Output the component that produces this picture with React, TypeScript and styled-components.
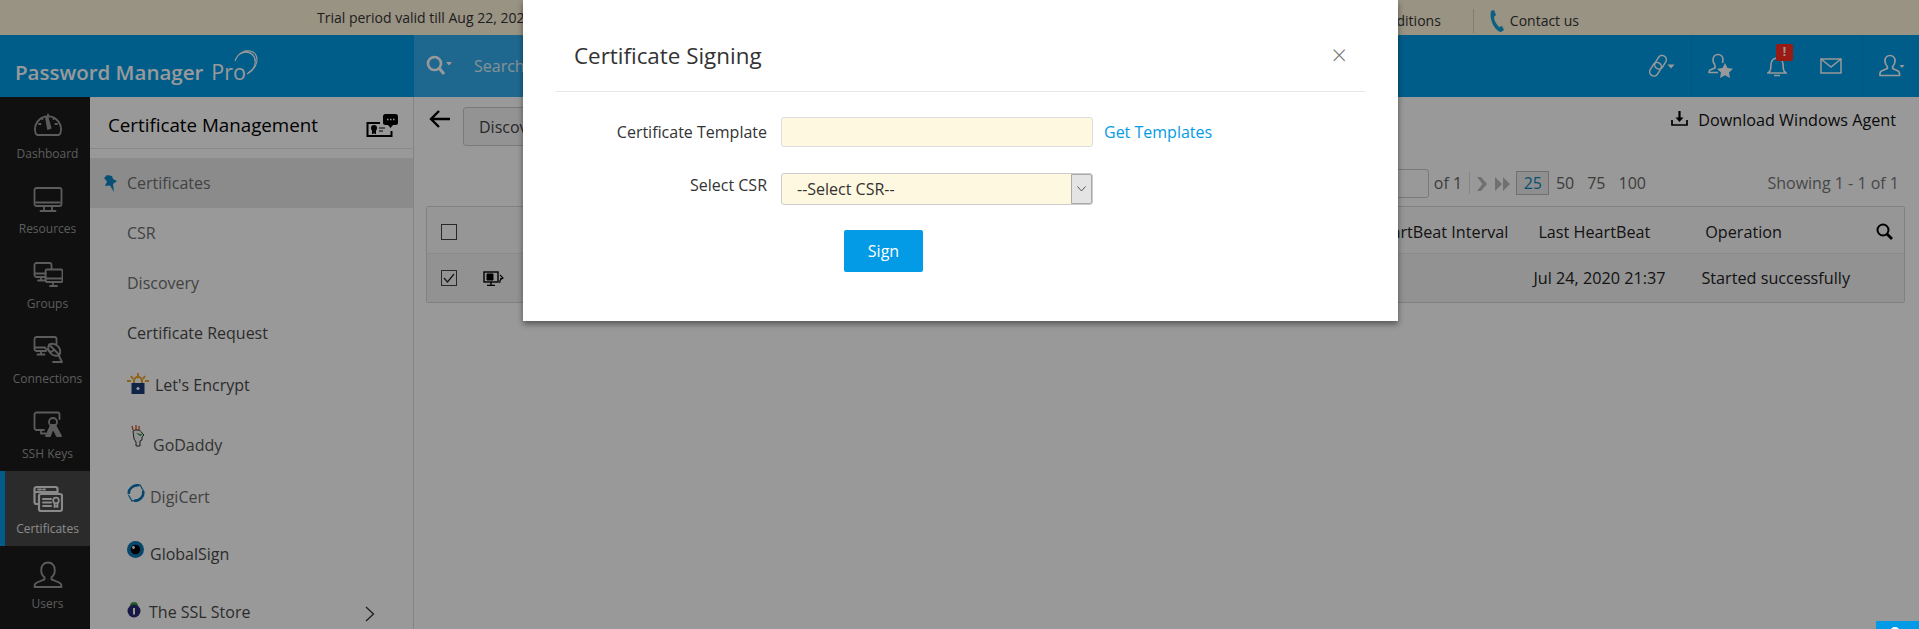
import React from 'react';
import styled, {createGlobalStyle} from 'styled-components';

const GlobalStyle = createGlobalStyle`
    html, body {
        margin: 0;
        height: 100%;
        overflow: hidden;
        background: #fff;
    }
    * {
        box-sizing: border-box;
    }
    body, input, select, button {
        font-family: "Open Sans", "Noto Sans", sans-serif;
    }
`

const Line = ({children, size = 24, color = 'currentColor', w = 1.8}: {children: React.ReactNode, size?: number, color?: string, w?: number}) => (
    <svg width={size} height={size} viewBox="0 0 30 30" fill="none" stroke={color} strokeWidth={w} strokeLinecap="round" strokeLinejoin="round">
        {children}
    </svg>
);

const railIcons: Record<string, React.ReactNode> = {
    gauge: <>
        <path d="M4.500 25a2.500 2.500 0 0 1-1.700-1.200A13 13 0 1 1 27.200 23.800a2.500 2.500 0 0 1-1.700 1.200z"/>
        <path d="M13 7.500l1.500-.5 3 11-2.500 1z" fill="currentColor"/>
        <path d="M15 4.500v1.500M6 14h1.600M24 14h-1.600M8.500 8l1 1M21.500 8l-1 1"/>
    </>,
    monitor: <>
        <rect x="1.500" y="3" width="27" height="18" rx="2"/>
        <path d="M11 21v4M19 21v4M7.500 26h15M3 17.500h24"/>
    </>,
    groups: <>
        <path d="M13 17H3.500a2 2 0 0 1-2-2V5a2 2 0 0 1 2-2h13a2 2 0 0 1 2 2v4M2 13.500h11M8 17v3M5 20.500h8"/>
        <rect x="12.500" y="9.500" width="17" height="12.500" rx="1.500"/>
        <path d="M20 22v3M17 26h7M13 18.500h16"/>
    </>,
    connection: <>
        <path d="M13 16H3.500a2 2 0 0 1-2-2V4a2 2 0 0 1 2-2h18a2 2 0 0 1 2 2v5M2 12.500h10M8 16v3M4.500 19.500h7"/>
        <path d="M16 9.500a8 8 0 0 1 10.500 10.500zM16 9.500a8 8 0 0 0 10.500 10.500z"/>
        <path d="M12 13l6 4M21 15l-3 2M20 27h9l-3-6"/>
    </>,
    keys: <>
        <path d="M11 20H3.500a2 2 0 0 1-2-2V4.500a2 2 0 0 1 2-2h21a2 2 0 0 1 2 2V9M8 20v3.500h4.500"/>
        <circle cx="20" cy="12" r="4"/>
        <path d="M13 26l5-11h4l6 11h-4l-4-8-3 8z" fill="currentColor"/>
    </>,
    cert: <>
        <path d="M5 19H3.500a2 2 0 0 1-2-2V4a2 2 0 0 1 2-2h19a2 2 0 0 1 2 2v4" strokeWidth="2.200"/>
        <path d="M2 7h22M5 4.500h3M10 4.500h2"/>
        <rect x="6" y="9" width="23" height="17" rx="2" strokeWidth="2.200"/>
        <path d="M10 14h8M10 17.500h8M10 21h8" strokeWidth="2"/>
        <circle cx="23" cy="15.500" r="2.800" strokeWidth="1.800"/>
        <path d="M21.500 18v4l1.500-1 1.500 1v-4"/>
    </>,
    user: <>
        <path d="M15 2.500c4.200 0 6.800 3.300 6.800 7.400 0 3-1.500 6-3.300 7.300v2.200l7.500 3.100c1.700.8 2.500 2 2.500 3.500v1H1.500v-1c0-1.500.8-2.700 2.500-3.500l7.500-3.100v-2.200c-1.800-1.300-3.300-4.300-3.300-7.300 0-4.100 2.600-7.400 6.800-7.400z"/>
    </>,
};

const railItems = [
    {label: 'Dashboard', icon: 'gauge'},
    {label: 'Resources', icon: 'monitor'},
    {label: 'Groups', icon: 'groups'},
    {label: 'Connections', icon: 'connection'},
    {label: 'SSH Keys', icon: 'keys'},
    {label: 'Certificates', icon: 'cert', active: true},
    {label: 'Users', icon: 'user'},
];

const LetsEncryptIcon = () => (
    <svg width="22" height="22" viewBox="0 0 22 22" fill="none">
        <path d="M11 0v4M4 3l2 3M18 3l-2 3M0 8h4M18 8h4" stroke="#f0a020" strokeWidth="1.800"/>
        <path d="M7 10V8a4 4 0 0 1 8 0v2" stroke="#f0a020" strokeWidth="2"/>
        <rect x="4.500" y="10" width="13" height="11" fill="#1c3c78"/>
        <circle cx="11" cy="15.500" r="1.600" fill="#fff"/>
    </svg>
);
const GoDaddyIcon = () => (
    <svg width="19" height="22" viewBox="-4 0 19 22" fill="none">
        <path d="M2 5L1 1M5 5V0M8 5V1" stroke="#d0521e" strokeWidth="1.300"/>
        <path d="M2 6c3-2 8-1 9 2l2 2-2 2v3l-2 1v5H5v-4L3 14z" fill="#f4f4f4" stroke="#333" strokeWidth="1"/>
        <path d="M5 8l7 1.500-3 1.500z" fill="#2c9c3c"/>
    </svg>
);
const DigiCertIcon = () => (
    <svg width="18" height="18" viewBox="0 0 18 18" fill="none">
        <path d="M2 10C1 5 6 1 12 1M16 7c1.500 5-3 10-9 10" stroke="#0c77b4" strokeWidth="2.600"/>
        <path d="M5 3l8-2 3.500 6M13 15l-8 2-3.500-6" stroke="#0c77b4" strokeWidth="1.200"/>
    </svg>
);
const GlobalSignIcon = () => (
    <svg width="17" height="17" viewBox="0 0 17 17">
        <circle cx="8.500" cy="8.500" r="8.500" fill="#0c77b4"/>
        <circle cx="8.500" cy="8.500" r="4.800" fill="#000"/>
        <circle cx="6.500" cy="6.500" r="1.400" fill="#fff"/>
    </svg>
);
const SslStoreIcon = () => (
    <svg width="14" height="18" viewBox="0 0 14 18">
        <path d="M3 6a4 4 0 0 1 8 0z" fill="#3f9d3f"/>
        <circle cx="7" cy="11" r="6.500" fill="#2a2a78"/>
        <rect x="6" y="8" width="2" height="6.500" fill="#fff"/>
    </svg>
);

const PinIcon = () => (
    <svg width="13" height="17" viewBox="0 0 13 17">
        <path d="M3 0l5 1 1 3 4 2-4 3 1 8-4-6.500-5 .5 2-4.500L0 3z" fill="#0c85c0"/>
    </svg>
);

const menuItems: {label: string, icon?: React.ReactNode, pin?: boolean, active?: boolean, h: number, gap?: number, lift?: number, arrow?: boolean, tone: string}[] = [
    {label: 'Certificates', pin: true, active: true, h: 50, tone: '#6e6e6e'},
    {label: 'CSR', h: 50, tone: '#6e6e6e'},
    {label: 'Discovery', h: 50, tone: '#6e6e6e'},
    {label: 'Certificate Request', h: 50, tone: '#4a4a4a'},
    {label: "Let's Encrypt", icon: <LetsEncryptIcon/>, h: 54, gap: 6, lift: 1, tone: '#4a4a4a'},
    {label: 'GoDaddy', icon: <GoDaddyIcon/>, h: 66, gap: 7, lift: 9, tone: '#555'},
    {label: 'DigiCert', icon: <DigiCertIcon/>, h: 38, gap: 5, lift: 4, tone: '#6e6e6e'},
    {label: 'GlobalSign', icon: <GlobalSignIcon/>, h: 76, gap: 6, lift: 5, tone: '#4a4a4a'},
    {label: 'The SSL Store', icon: <SslStoreIcon/>, h: 40, gap: 8, lift: 3, arrow: true, tone: '#4a4a4a'},
];

const App = () => {
    return (
        <Page>
            <GlobalStyle/>
            <TopBar>
                <Trial>Trial period valid till Aug 22, 2020</Trial>
                <TopLinks>
                    <span>Terms and Conditions</span>
                    <TopDivider/>
                    <svg width="16" height="22" viewBox="0 0 16 22">
                        <path d="M2 1l3-1 2 5-2 2c0 3 2 7 5 10l3-1 2 4-3 2C6 21 0 10 2 1z" fill="#12a0d8"/>
                    </svg>
                    <span>Contact us</span>
                </TopLinks>
            </TopBar>
            <Header>
                <Logo>
                    <LogoText>Password Manager<LogoPro>Pro</LogoPro></LogoText>
                    <LogoSwoosh>
                        <svg width="26" height="26" viewBox="0 0 26 26" fill="none" stroke="#fff">
                            <path d="M1 12C4 3 13 0 19 3c6 4 6 15-6 22" strokeWidth="1.100"/>
                            <path d="M6 5c6-4 13-1 15 5 1 6-2 11-7 14" strokeWidth="1.100"/>
                            <path d="M10 2c7 0 11 4 11 10" strokeWidth="1"/>
                        </svg>
                    </LogoSwoosh>
                </Logo>
                <SearchBox>
                    <svg width="26" height="22" viewBox="0 0 26 22" fill="none">
                        <circle cx="8.500" cy="8.500" r="6.500" stroke="#fff" strokeWidth="2.600"/>
                        <path d="M13 13l5 6" stroke="#fff" strokeWidth="3"/>
                        <path d="M20 7h6l-3 3.500z" fill="#fff"/>
                    </svg>
                    <SearchText>Search</SearchText>
                </SearchBox>
                <HeaderTools>
                    <ToolGroup>
                        <svg width="26" height="24" viewBox="0 0 26 24" fill="none" stroke="#fff" strokeWidth="1.500">
                            <rect x="7.250" y="1" width="8.500" height="14.500" rx="4.250" transform="rotate(32 11.500 8.250)"/>
                            <rect x="2.250" y="8" width="8.500" height="14.500" rx="4.250" transform="rotate(32 6.500 15.250)"/>
                            <path d="M18.500 10.500h7l-3.500 4z" fill="#fff" stroke="none"/>
                        </svg>
                    </ToolGroup>
                    <ToolGroup $gap={33} $wide>
                        <svg width="26" height="26" viewBox="0 0 26 26" fill="none" stroke="#fff" strokeWidth="1.600">
                            <path d="M10 1.500c3 0 5 2.500 5 5.500 0 1-.2 2-.6 3M7 12c-1-1-2-3-2-5 0-3 2-5.500 5-5.500M7 12v3l-5 2c-1 .5-1 1.500-1 2.500h9"/>
                            <path d="M17 10l2.500 5 5.500.7-4 3.800 1 5.500-5-2.700-5 2.700 1-5.500-4-3.800 5.500-.7z" fill="#fff" stroke="none"/>
                        </svg>
                        <BellWrap>
                            <svg width="20" height="24" viewBox="0 0 20 24" fill="none" stroke="#fff" strokeWidth="1.600">
                                <path d="M3 17c1-2 1-4 1-7a6 6 0 0 1 12 0c0 3 0 5 1 7l2 2H1zM7 21.500h6M10 1v3"/>
                            </svg>
                            <Badge>!</Badge>
                        </BellWrap>
                        <svg width="22" height="16" viewBox="0 0 22 16" fill="none" stroke="#fff" strokeWidth="1.500">
                            <rect x="1" y="1" width="20" height="14"/>
                            <path d="M1 1l10 8 10-8"/>
                        </svg>
                    </ToolGroup>
                    <UserTool>
                        <svg width="26" height="24" viewBox="0 0 26 24" fill="none" stroke="#fff" strokeWidth="1.700">
                            <path d="M11 1.500c3 0 5 2.500 5 5.500 0 2.200-1 4.300-2.300 5.300v2.200l5.300 2.500c1.200.6 1.500 1.500 1.500 2.500v2H1v-2c0-1 .3-1.900 1.500-2.500l5.800-2.500v-2.200C7 11.300 6 9.200 6 7c0-3 2-5.500 5-5.500z"/>
                            <path d="M20.500 11h5l-2.500 3z" fill="#fff" stroke="none"/>
                        </svg>
                    </UserTool>
                </HeaderTools>
            </Header>
            <Body>
                <Rail>
                    {railItems.map(item => (
                        <RailItem key={item.label} $active={item.active}>
                            <Line size={30}>{railIcons[item.icon]}</Line>
                            <span>{item.label}</span>
                        </RailItem>
                    ))}
                </Rail>
                <Panel>
                    <PanelHead>
                        <PanelTitle>Certificate Management</PanelTitle>
                        <PanelBadge>
                            <svg width="32" height="24" viewBox="0 0 32 24" fill="none">
                                <path d="M14 9H1.500v13h24v-5" stroke="#000" strokeWidth="2"/>
                                <circle cx="8" cy="14" r="3" fill="#000"/>
                                <path d="M6.500 15v5l1.500-1.500L9.500 20v-5zM13 14h6M13 17h4" fill="#000" stroke="#000"/>
                                <path d="M17 2.500A2.500 2.500 0 0 1 19.500 0h10A2.500 2.500 0 0 1 32 2.500v6a2.500 2.500 0 0 1-2.500 2.500H27l-2.500 3-2.500-3h-2.500A2.500 2.500 0 0 1 17 8.500z" fill="#000"/>
                                <path d="M21 5.500h1.500M24 5.500h1.500M27 5.500h1.500" stroke="#fff" strokeWidth="1.600"/>
                            </svg>
                        </PanelBadge>
                    </PanelHead>
                    <Menu>
                        {menuItems.map(item => (
                            <MenuItem key={item.label} $active={item.active} $h={item.h} $gap={item.gap} $tone={item.tone}>
                                {item.pin && <PinSlot><PinIcon/></PinSlot>}
                                {item.icon && <MenuIcon $lift={item.lift}>{item.icon}</MenuIcon>}
                                <span>{item.label}</span>
                                {item.arrow && (
                                    <MenuArrow>
                                        <svg width="10" height="16" viewBox="0 0 10 16" fill="none" stroke="#333" strokeWidth="1.300">
                                            <path d="M1 1l7.500 7L1 15"/>
                                        </svg>
                                    </MenuArrow>
                                )}
                            </MenuItem>
                        ))}
                    </Menu>
                </Panel>
                <Main>
                    <ActionRow>
                        <svg width="21" height="18" viewBox="0 0 21 18" fill="none" stroke="#000" strokeWidth="2.400">
                            <path d="M21 9H2M10 1L2 9l8 8"/>
                        </svg>
                        <ActionButton>Discovery</ActionButton>
                        <DownloadLink>
                            <svg width="17" height="15" viewBox="0 0 17 15" fill="none" stroke="#000" strokeWidth="1.700">
                                <path d="M1 9v5h15V9"/>
                                <path d="M8.500 0v9" strokeWidth="2.200"/>
                                <path d="M4.500 6.500h8l-4 4.500z" fill="#000" stroke="none"/>
                            </svg>
                            <span>Download Windows Agent</span>
                        </DownloadLink>
                    </ActionRow>
                    <PagerRow>
                        <PageInput/>
                        <PageOf>of 1</PageOf>
                        <PagerArrows>
                            <svg width="11" height="14" viewBox="0 0 11 14"><path d="M0 0h4l6 7-6 7H0l5.500-7z" fill="#bbb"/></svg>
                            <svg width="15" height="14" viewBox="0 0 15 14"><path d="M0 0l7 7-7 7zM8 0l7 7-7 7z" fill="#bbb"/></svg>
                        </PagerArrows>
                        <PageSize $active>25</PageSize>
                        <PageSize>50</PageSize>
                        <PageSize>75</PageSize>
                        <PageSize>100</PageSize>
                        <Showing>Showing 1 - 1 of 1</Showing>
                    </PagerRow>
                    <Table>
                        <HeadRow>
                            <CheckBox/>
                            <HeadLabels>
                                <span>HeartBeat Interval</span>
                                <span>Last HeartBeat</span>
                                <span>Operation</span>
                            </HeadLabels>
                            <svg width="17" height="17" viewBox="0 0 17 17" fill="none" stroke="#000">
                                <circle cx="7" cy="7" r="5.500" strokeWidth="2"/>
                                <path d="M11 11l5 5" strokeWidth="2.800"/>
                            </svg>
                        </HeadRow>
                        <DataRow>
                            <CheckBox $checked>
                                <svg width="12" height="10" viewBox="0 0 12 10" fill="none" stroke="#222" strokeWidth="1.200">
                                    <path d="M1 5l3.500 4L11 1"/>
                                </svg>
                            </CheckBox>
                            <RowIcon>
                                <svg width="21" height="15" viewBox="0 0 21 15" fill="none" stroke="#000">
                                    <rect x="1" y="1" width="14" height="10" strokeWidth="1.400"/>
                                    <path d="M8 11v3M4 14.500h8" strokeWidth="1.400"/>
                                    <path d="M4 3h6v6H4z" fill="#000"/>
                                    <path d="M17 4l3 3-3 1M20 7c-2 1-4 2-3 5" strokeWidth="1.100"/>
                                </svg>
                            </RowIcon>
                            <RowCells>
                                <span>Jul 24, 2020 21:37</span>
                                <span>Started successfully</span>
                            </RowCells>
                        </DataRow>
                    </Table>
                </Main>
            </Body>
            <Overlay>
                <Modal>
                    <ModalHead>
                        <ModalTitle>Certificate Signing</ModalTitle>
                        <CloseButton>×</CloseButton>
                    </ModalHead>
                    <FormRow>
                        <FieldLabel>Certificate Template</FieldLabel>
                        <TextField/>
                        <FieldLink>Get Templates</FieldLink>
                    </FormRow>
                    <FormRow $top={26}>
                        <FieldLabel $lift={4}>Select CSR</FieldLabel>
                        <SelectField>
                            <span>--Select CSR--</span>
                            <SelectArrow>
                                <svg width="9" height="6" viewBox="0 0 9 6" fill="none" stroke="#555">
                                    <path d="M.5.500l4 4.500 4-4.500"/>
                                </svg>
                            </SelectArrow>
                        </SelectField>
                    </FormRow>
                    <SignButton>Sign</SignButton>
                </Modal>
            </Overlay>
            <HelpTab>
                <svg width="10" height="2" viewBox="0 0 10 2"><circle cx="5" cy="5" r="5" fill="#fff"/></svg>
            </HelpTab>
        </Page>
    );
};

export default App;

const Page = styled.div`
    position: relative;
    height: 100vh;
    display: flex;
    flex-direction: column;
    overflow: hidden;
    background: #fff;
    color: #222;
`

const TopBar = styled.div`
    height: 35px;
    flex: none;
    display: flex;
    align-items: center;
    justify-content: space-between;
    padding: 0 340px 0 317px;
    background: #fff5dc;
    font-size: 14px;
    color: #333;
`

const Trial = styled.span`
    margin-top: -1px;
`

const TopLinks = styled.div`
    display: flex;
    align-items: center;
    gap: 5px;
    margin-top: 6px;

    svg {
        margin-left: 2px;
    }
`

const TopDivider = styled.span`
    width: 1px;
    height: 24px;
    margin: 0 8px 0 27px;
    background: #d8d0bc;
`

const Header = styled.header`
    height: 62px;
    flex: none;
    display: flex;
    background: #019be6;
    color: #fff;
`

const Logo = styled.div`
    width: 414px;
    flex: none;
    display: flex;
    align-items: flex-start;
    padding: 15px 0 0 15px;
`

const LogoText = styled.span`
    margin-top: 7px;
    font-size: 20.5px;
    font-weight: 600;
    white-space: nowrap;
`

const LogoPro = styled.span`
    margin-left: 8px;
    font-size: 21.5px;
    font-weight: 400;
`

const LogoSwoosh = styled.span`
    display: flex;
    margin-left: -12px;
    margin-top: -1px;
`

const SearchBox = styled.div`
    width: 400px;
    flex: none;
    display: flex;
    align-items: center;
    gap: 22px;
    padding-left: 12px;
    background: #33aeee;
`

const SearchText = styled.span`
    font-size: 16px;
    opacity: .85;
`

const HeaderTools = styled.div`
    flex: 1;
    display: flex;
    justify-content: flex-end;
    align-items: stretch;
`

const ToolGroup = styled.div<{$gap?: number, $wide?: boolean}>`
    display: flex;
    align-items: center;
    gap: ${p => p.$gap || 0}px;
    padding: ${p => (p.$wide ? '0 20px 0 16px' : '0 16px')};
    border-right: 1px solid #0090d8;
`

const BellWrap = styled.div`
    position: relative;
    display: flex;
`

const Badge = styled.span`
    position: absolute;
    top: -10px;
    left: 9px;
    width: 17px;
    height: 17px;
    border-radius: 2px;
    background: #ff2d20;
    color: #fff;
    font-size: 12px;
    font-weight: 700;
    line-height: 15px;
    text-align: center;
`

const UserTool = styled.div`
    width: 56px;
    flex: none;
    display: flex;
    align-items: center;
    padding-left: 16px;
`

const Body = styled.div`
    flex: 1;
    min-height: 0;
    display: flex;
`

const Rail = styled.nav`
    width: 90px;
    flex: none;
    background: #1c1c1c;
`

const RailItem = styled.div<{$active?: boolean}>`
    height: 75px;
    display: flex;
    flex-direction: column;
    align-items: center;
    justify-content: flex-end;
    gap: 5px;
    padding-bottom: 9px;
    border-left: 5px solid ${p => (p.$active ? '#019be6' : 'transparent')};
    background: ${p => (p.$active ? '#484848' : 'transparent')};
    color: ${p => (p.$active ? '#e6e6e6' : '#9a9a9a')};
    font-size: 12px;
    line-height: 17px;

    &:first-child {
        height: 74px;
    }
`

const Panel = styled.aside`
    width: 324px;
    flex: none;
    background: #fff;
    border-right: 1px solid #dcdcdc;
`

const PanelHead = styled.div`
    height: 52px;
    display: flex;
    align-items: center;
    justify-content: space-between;
    padding: 4px 15px 0 18px;
    border-bottom: 1px solid #e4e4e4;
`

const PanelTitle = styled.h2`
    margin: 0;
    font-size: 18.75px;
    font-weight: 400;
    color: #000;
`

const PanelBadge = styled.span`
    display: flex;
    margin-top: 2px;
`

const Menu = styled.div`
    padding-top: 9px;
`

const MenuItem = styled.div<{$active?: boolean, $h: number, $gap?: number, $tone: string}>`
    position: relative;
    height: ${p => p.$h}px;
    display: flex;
    align-items: center;
    gap: ${p => p.$gap || 0}px;
    padding: 0 38px 0 37px;
    background: ${p => (p.$active ? '#e8e8e8' : 'transparent')};
    font-size: 16px;
    color: ${p => p.$tone};
`

const PinSlot = styled.span`
    position: absolute;
    left: 14px;
    top: 17px;
    display: flex;
`

const MenuIcon = styled.span<{$lift?: number}>`
    display: flex;
    flex: none;
    margin-top: ${p => -2 * (p.$lift || 0)}px;
`

const MenuArrow = styled.span`
    display: flex;
    margin-left: auto;
    padding-top: 3px;
`

const Main = styled.main`
    flex: 1;
    min-width: 0;
    padding: 10px 14px 0 12px;
    background: #fff;
`

const ActionRow = styled.div`
    display: flex;
    align-items: center;
    height: 39px;
    padding-left: 3px;

    > svg {
        margin-top: -16px;
    }
`

const ActionButton = styled.button`
    height: 39px;
    width: 160px;
    margin-left: 13px;
    padding: 0 15px;
    border: 1px solid #ccc;
    border-radius: 3px;
    background: #f5f5f5;
    color: #444;
    font-size: 16px;
    text-align: left;
`

const DownloadLink = styled.div`
    display: flex;
    align-items: center;
    gap: 10px;
    margin-left: auto;
    margin-right: 9px;
    margin-top: -14px;
    font-size: 16.2px;
    color: #111;

    svg {
        margin-top: -3px;
    }
`

const PagerRow = styled.div`
    display: flex;
    align-items: center;
    height: 36px;
    margin-top: 19px;
    padding-right: 6px;
    justify-content: flex-end;
    font-size: 16px;
    color: #666;
`

const PageInput = styled.div`
    width: 40px;
    height: 29px;
    border: 1px solid #ccc;
    border-radius: 3px;
    margin-right: 5px;
`

const PageOf = styled.span`
    padding-right: 7px;
    border-right: 1px solid #e0e0e0;
`

const PagerArrows = styled.span`
    display: flex;
    align-items: center;
    gap: 7px;
    margin: 2px 6px 0 7px;
`

const PageSize = styled.span<{$active?: boolean}>`
    height: 24px;
    display: flex;
    align-items: center;
    padding: 0 ${p => (p.$active ? '6.5px' : '5.5px')};
    border: 1px solid ${p => (p.$active ? '#bbb' : 'transparent')};
    background: ${p => (p.$active ? '#efefef' : 'transparent')};
    color: ${p => (p.$active ? '#0c85c0' : '#666')};
`

const Showing = styled.span`
    margin-left: 115px;
    color: #777;
`

const Table = styled.div`
    margin-top: 5px;
    border: 1px solid #d8d8d8;
    border-radius: 2px;
`

const HeadRow = styled.div`
    height: 47px;
    display: flex;
    align-items: center;
    padding: 3px 11px 0 14px;
    border-bottom: 1px solid #e8e8e8;
    background: #fbfbfb;
    font-size: 16.2px;
    color: #222;
`

const HeadLabels = styled.div`
    flex: 1;
    display: flex;
    justify-content: flex-end;
    gap: 30px;
    padding-right: 94px;

    span:last-child {
        margin-left: 25px;
    }
`

const CheckBox = styled.span<{$checked?: boolean}>`
    width: 16px;
    height: 16px;
    flex: none;
    display: flex;
    align-items: center;
    justify-content: center;
    border: 1px solid #444;
    background: ${p => (p.$checked ? '#f5f5f5' : '#fff')};
`

const DataRow = styled.div`
    height: 48px;
    display: flex;
    align-items: center;
    padding-left: 14px;
    background: #f3f3f3;
    font-size: 16.2px;
    color: #222;
`

const RowIcon = styled.span`
    display: flex;
    margin-left: 26px;
`

const RowCells = styled.div`
    flex: 1;
    display: flex;
    justify-content: flex-end;
    gap: 36px;
    padding-right: 54px;
`

const Overlay = styled.div`
    position: absolute;
    inset: 0;
    display: flex;
    justify-content: center;
    align-items: flex-start;
    background: rgba(0, 0, 0, .4);
`

const Modal = styled.div`
    width: 875px;
    height: 321px;
    margin-left: 2px;
    padding: 0 33px;
    background: #fff;
    box-shadow: 0 3px 6px rgba(0, 0, 0, .45);
`

const ModalHead = styled.div`
    height: 92px;
    display: flex;
    align-items: center;
    justify-content: space-between;
    padding: 21px 18px 0 18px;
    border-bottom: 1px solid #e6e6e6;
    margin-bottom: 25px;
`

const ModalTitle = styled.h3`
    margin: 0 0 2px;
    font-size: 22.4px;
    font-weight: 400;
    color: #333;
`

const CloseButton = styled.span`
    margin-bottom: 4px;
    font-size: 27px;
    font-weight: 300;
    color: #777;
    line-height: 1;
`

const FormRow = styled.div<{$top?: number}>`
    display: flex;
    align-items: center;
    margin-top: ${p => p.$top || 0}px;
    font-size: 16px;
`

const FieldLabel = styled.label<{$lift?: number}>`
    width: 211px;
    flex: none;
    margin-right: 14px;
    margin-top: ${p => -2 * (p.$lift || 0)}px;
    text-align: right;
    color: #333;
`

const TextField = styled.div`
    width: 312px;
    height: 30px;
    border: 1px solid #ddd;
    border-radius: 3px;
    background: #fef8e0;
`

const FieldLink = styled.a`
    margin-left: 11px;
    color: #039be5;
`

const SelectField = styled.div`
    width: 312px;
    height: 32px;
    display: flex;
    align-items: center;
    justify-content: space-between;
    padding-left: 15px;
    border: 1px solid #ccc;
    border-radius: 3px;
    background: #fef8e0;
    color: #333;
`

const SelectArrow = styled.span`
    width: 21px;
    height: 100%;
    display: flex;
    align-items: center;
    justify-content: center;
    border: 1px solid #aaa;
    border-radius: 0 2px 2px 0;
    background: #e4e4e4;
`

const SignButton = styled.button`
    display: block;
    width: 79px;
    height: 42px;
    margin: 25px 0 0 288px;
    border: 0;
    border-radius: 2px;
    background: #039be5;
    color: #fff;
    font-size: 16px;
`

const HelpTab = styled.div`
    position: absolute;
    right: 0;
    bottom: 0;
    width: 43px;
    height: 8px;
    display: flex;
    align-items: flex-end;
    justify-content: center;
    padding-right: 5px;
    background: #039be5;
`
